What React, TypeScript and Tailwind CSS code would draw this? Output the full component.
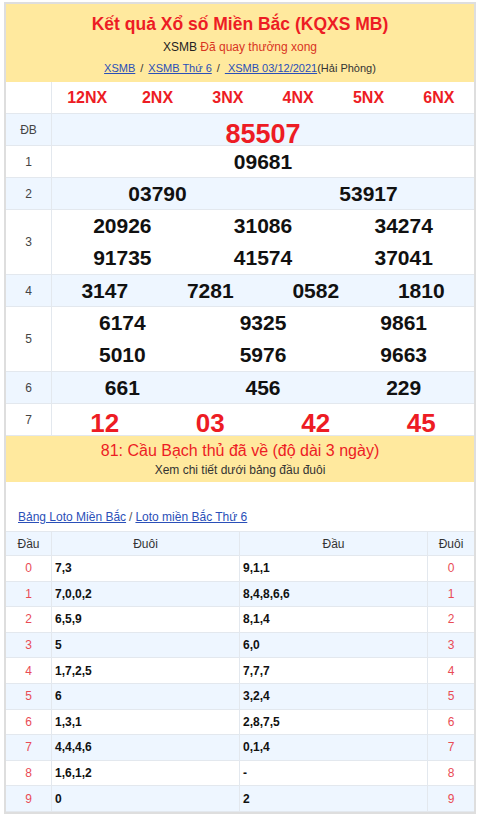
const prizeRows: { label: string; cols: number; lines: string[][]; tone: string; blue: boolean }[] = [
  { label: 'ĐB', cols: 1, lines: [['85507']], tone: 'special', blue: true },
  { label: '1', cols: 1, lines: [['09681']], tone: 'normal', blue: false },
  { label: '2', cols: 2, lines: [['03790', '53917']], tone: 'normal', blue: true },
  { label: '3', cols: 3, lines: [['20926', '31086', '34274'], ['91735', '41574', '37041']], tone: 'normal', blue: false },
  { label: '4', cols: 4, lines: [['3147', '7281', '0582', '1810']], tone: 'normal', blue: true },
  { label: '5', cols: 3, lines: [['6174', '9325', '9861'], ['5010', '5976', '9663']], tone: 'normal', blue: false },
  { label: '6', cols: 3, lines: [['661', '456', '229']], tone: 'normal', blue: true },
  { label: '7', cols: 4, lines: [['12', '03', '42', '45']], tone: 'seven', blue: false },
];

const loto = [
  ['7,3', '9,1,1'],
  ['7,0,0,2', '8,4,8,6,6'],
  ['6,5,9', '8,1,4'],
  ['5', '6,0'],
  ['1,7,2,5', '7,7,7'],
  ['6', '3,2,4'],
  ['1,3,1', '2,8,7,5'],
  ['4,4,4,6', '0,1,4'],
  ['1,6,1,2', '-'],
  ['0', '2'],
];

const gridCols: Record<number, string> = {
  1: 'grid-cols-1',
  2: 'grid-cols-2',
  3: 'grid-cols-3',
  4: 'grid-cols-4',
};

function numClass(tone: string): string {
  switch (tone) {
    case 'special': return 'text-[27px] text-[#ed1c24]';
    case 'seven': return 'text-[26px] text-[#ed1c24]';
    default: return 'text-[21px] text-[#111]';
  }
}

export default function App(): React.ReactElement {
  return (
    <div className="bg-white px-[4px] pt-[2px] font-['Liberation_Sans',Arial,sans-serif]">
      <div className="border-2 border-[#dedede]">
        {/* Header */}
        <div className="flex h-[78px] flex-col items-center bg-[#ffe99e] pt-[8px]">
          <h1 className="text-[17.5px] font-bold leading-[24px] text-[#ed1c24]">Kết quả Xổ số Miền Bắc (KQXS MB)</h1>
          <p className="mt-[3px] text-[12px] leading-[16px] text-[#222]">
            XSMB <span className="text-[#d9341f]">Đã quay thưởng xong</span>
          </p>
          <p className="mt-[6px] text-[11px] leading-[15px] text-[#333]">
            <a className="text-[#2a4fb8] underline">XSMB</a>
            <span className="mx-[5px]">/</span>
            <a className="text-[#2a4fb8] underline">XSMB Thứ 6</a>
            <span className="mx-[5px]">/</span>
            <a className="text-[#2a4fb8] underline">&nbsp;XSMB 03/12/2021</a>
            (Hải Phòng)
          </p>
        </div>

        {/* Results table */}
        <div className="flex h-[32px] border-b border-[#e3e8ee]">
          <div className="w-[46px] border-r border-[#e3e8ee]" />
          <div className="grid flex-1 grid-cols-6 items-center text-center text-[16px] font-bold text-[#ed1c24]">
            {['12NX', '2NX', '3NX', '4NX', '5NX', '6NX'].map((n) => (
              <span key={n}>{n}</span>
            ))}
          </div>
        </div>
        {prizeRows.map((row) => (
          <div
            key={row.label}
            className={`flex border-b border-[#e3e8ee] ${row.blue ? 'bg-[#eef6ff]' : 'bg-white'}`}
          >
            <div className="flex w-[46px] items-center justify-center border-r border-[#e3e8ee] text-[12px] text-[#444]">
              {row.label}
            </div>
            <div className="flex-1">
              {row.lines.map((line, i) => (
                <div
                  key={i}
                  className={`grid items-center text-center font-bold ${row.lines.length > 1 ? 'h-[32px]' : 'h-[31px]'} ${gridCols[row.cols]} ${numClass(row.tone)}`}
                >
                  {line.map((n) => (
                    <span key={n}>{n}</span>
                  ))}
                </div>
              ))}
            </div>
          </div>
        ))}

        {/* Cau band */}
        <div className="flex h-[46px] flex-col items-center bg-[#ffe99e] pt-[4px]">
          <p className="text-[16px] leading-[22px] text-[#ed1c24]">81: Cầu Bạch thủ đã về (độ dài 3 ngày)</p>
          <p className="mt-[1px] text-[12px] leading-[15px] text-[#333]">Xem chi tiết dưới bảng đầu đuôi</p>
        </div>

        {/* Loto */}
        <div className="h-[49px] bg-white pl-[12px] pt-[27px] text-[12px] leading-[16px] text-[#555]">
          <a className="text-[#2a4fb8] underline">Bảng Loto Miền Bắc</a>
          <span className="mx-[3px]">/</span>
          <a className="text-[#2a4fb8] underline">Loto miền Bắc Thứ 6</a>
        </div>
        <div className="grid grid-cols-[46px_1fr_1fr_46px] border-t border-[#e3e8ee] text-[12px]">
          <div className="flex h-[24px] items-center justify-center border-b border-r border-[#e3e8ee] bg-[#eef6ff] text-[#333]">Đầu</div>
          <div className="flex h-[24px] items-center justify-center border-b border-r border-[#e3e8ee] bg-[#eef6ff] text-[#333]">Đuôi</div>
          <div className="flex h-[24px] items-center justify-center border-b border-r border-[#e3e8ee] bg-[#eef6ff] text-[#333]">Đầu</div>
          <div className="flex h-[24px] items-center justify-center border-b border-[#e3e8ee] bg-[#eef6ff] text-[#333]">Đuôi</div>
          {loto.map(([duoi, dau], i) => {
            const bg = i % 2 === 1 ? 'bg-[#eef6ff]' : 'bg-white';
            return [
              <div key={`a${i}`} className={`flex h-[25.6px] items-center justify-center border-b border-r border-[#e3e8ee] text-[#e94b55] ${bg}`}>{i}</div>,
              <div key={`b${i}`} className={`flex h-[25.6px] items-center border-b border-r border-[#e3e8ee] pl-[3px] font-bold text-[#111] ${bg}`}>{duoi}</div>,
              <div key={`c${i}`} className={`flex h-[25.6px] items-center border-b border-r border-[#e3e8ee] pl-[3px] font-bold text-[#111] ${bg}`}>{dau}</div>,
              <div key={`d${i}`} className={`flex h-[25.6px] items-center justify-center border-b border-[#e3e8ee] text-[#e94b55] ${bg}`}>{i}</div>,
            ];
          })}
        </div>
      </div>
    </div>
  );
}
